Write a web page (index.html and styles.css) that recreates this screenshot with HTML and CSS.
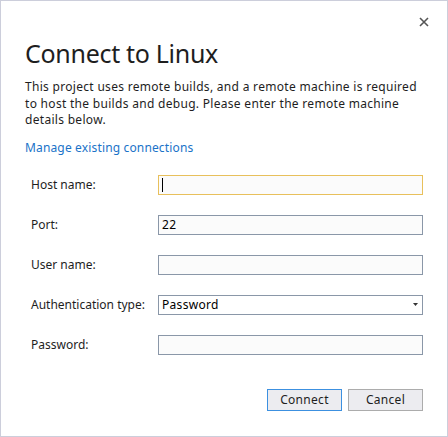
FILE: index.html
```html
<!DOCTYPE html>
<html>
<head>
<meta charset="utf-8">
<link rel="stylesheet" href="styles.css">
</head>
<body>
<div class="dialog">
  <div class="topbar">
    <svg class="close" width="10" height="10" viewBox="0 0 10 10"><path d="M1 1L9 9M9 1L1 9" stroke="#555" stroke-width="1.6"/></svg>
  </div>
  <h1 class="title">Connect to Linux</h1>
  <p class="desc">This project uses remote builds, and a remote machine is required to host the builds and debug. Please enter the remote machine details below.</p>
  <a class="link">Manage existing connections</a>
  <div class="form">
    <div class="row"><span class="label">Host name:</span><div class="field focus"><span class="caret"></span></div></div>
    <div class="row"><span class="label">Port:</span><div class="field">22</div></div>
    <div class="row"><span class="label">User name:</span><div class="field"></div></div>
    <div class="row"><span class="label">Authentication type:</span><div class="field select">Password<svg class="arrow" width="5" height="3" viewBox="0 0 5 3"><path d="M0 0H5L2.5 3Z" fill="#333"/></svg></div></div>
    <div class="row"><span class="label">Password:</span><div class="field"></div></div>
  </div>
  <div class="buttons">
    <div class="btn primary">Connect</div>
    <div class="btn">Cancel</div>
  </div>
</div>
</body>
</html>
```
FILE: styles.css
```css
html, body { margin: 0; padding: 0; }
body { width: 448px; height: 437px; background: #fff; font-family: "Noto Sans", "Open Sans", sans-serif; color: #1e1e1e; }
.dialog { box-sizing: border-box; width: 448px; height: 437px; border: 1px solid #cccedb; padding: 0 24px 0 24px; display: flex; flex-direction: column; }
.topbar { height: 26px; display: flex; justify-content: flex-end; align-items: flex-end; margin-right: -6px; margin-bottom: 4px; }
.close { display: block; }
.title { margin: 6px 0 0 0; font-weight: 400; font-size: 25px; line-height: 32px; color: #1e1e1e; letter-spacing: -0.3px; }
.desc { margin: 10px 0 0 0; font-size: 12px; line-height: 16.6px; color: #1e1e1e; letter-spacing: 0.3px; }
.link { margin-top: 11px; font-size: 12px; line-height: 16px; color: #1a73c8; letter-spacing: 0.15px; }
.form { margin-top: 19px; display: flex; flex-direction: column; gap: 20px; }
.row { display: flex; align-items: center; height: 20px; }
.label { width: 127px; padding-left: 6px; font-size: 12px; color: #1e1e1e; }
.field { box-sizing: border-box; flex: 1; height: 20px; border: 1px solid #8a97a8; background: #fbfbfb; font-size: 12px; line-height: 18px; padding-left: 3px; color: #000; position: relative; display: flex; align-items: center; letter-spacing: 0.3px; }
.field.focus { border-color: #e8c05c; }
.caret { width: 1px; height: 14px; background: #000; }
.select { justify-content: space-between; padding-right: 4px; background: #fff; }
.arrow { display: block; }
.buttons { margin-top: 34px; display: flex; justify-content: flex-end; gap: 6px; }
.btn { box-sizing: border-box; width: 75px; height: 22px; border: 1px solid #acacac; background: #ececf0; font-size: 12px; text-align: center; line-height: 20px; color: #1e1e1e; letter-spacing: 0.3px; }
.btn.primary { border-color: #3c90e0; }
```
